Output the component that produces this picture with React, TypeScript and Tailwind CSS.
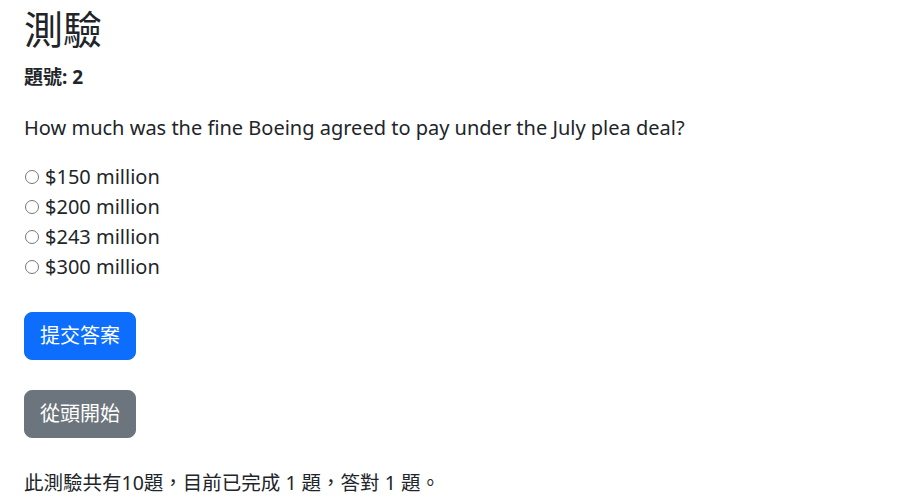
import { useState } from 'react';

const options = ['$150 million', '$200 million', '$243 million', '$300 million'];

function App() {
  const [picked, setPicked] = useState<string | null>(null);

  return (
    <div className="px-6 pt-[6px] text-[#212529] font-['Segoe_UI','Noto_Sans','Noto_Sans_CJK_TC',sans-serif]">
      <h1 className="text-[39px] leading-[46px] font-normal mb-[12px]">測驗</h1>
      <h5 className="text-[19px] leading-[27px] font-bold mb-[22px]">題號: 2</h5>
      <p className="text-[20px] leading-[30px] mb-[19px]">
        How much was the fine Boeing agreed to pay under the July plea deal?
      </p>
      <div className="flex flex-col mb-[30px]">
        {options.map((opt) => (
          <label key={opt} className="flex items-center gap-[6px] text-[20px] leading-[30px] cursor-pointer">
            <input
              type="radio"
              name="answer"
              value={opt}
              checked={picked === opt}
              onChange={() => setPicked(opt)}
              className="appearance-none w-[14px] h-[14px] ml-[1px] rounded-full border border-[#767676] bg-white checked:border-[4px] checked:border-[#0d6efd]"
            />
            {opt}
          </label>
        ))}
      </div>
      <button className="block bg-[#0d6efd] text-white text-[20px] leading-[30px] px-[15px] py-2 rounded-lg border border-[#0d6efd] mb-[30px]">
        提交答案
      </button>
      <button className="block bg-[#6c757d] text-white text-[20px] leading-[30px] px-[15px] py-2 rounded-lg border border-[#6c757d] mb-[31px]">
        從頭開始
      </button>
      <p className="text-[19.5px] leading-[28px]">此測驗共有10題，目前已完成 1 題，答對 1 題。</p>
    </div>
  );
}

export default App;
